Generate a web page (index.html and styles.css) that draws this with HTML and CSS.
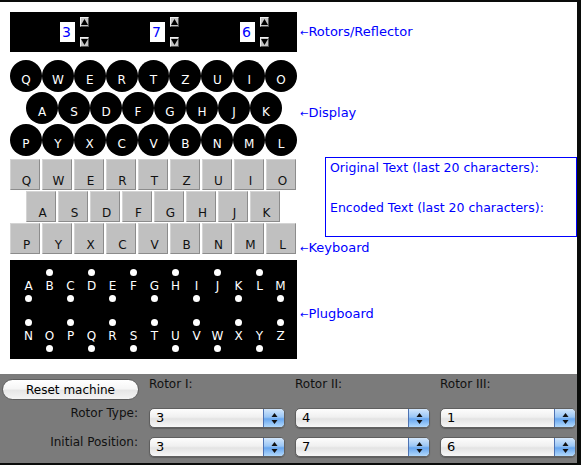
FILE: index.html
```html
<!DOCTYPE html>
<html>
<head>
<meta charset="utf-8">
<title>Enigma</title>
<link rel="stylesheet" href="styles.css">
</head>
<body>
<div class="window">
  <div class="top">
    <div class="rotors">
      <div class="rotor">
        <div class="rbox">3</div>
        <div class="rarrows">
          <div class="rbtn"><svg width="7" height="6" viewBox="0 0 7 6"><polygon points="3.5,0 7,6 0,6" fill="#000"/></svg></div>
          <div class="rbtn"><svg width="7" height="6" viewBox="0 0 7 6"><polygon points="0,0 7,0 3.5,6" fill="#000"/></svg></div>
        </div>
      </div>
      <div class="rotor">
        <div class="rbox">7</div>
        <div class="rarrows">
          <div class="rbtn"><svg width="7" height="6" viewBox="0 0 7 6"><polygon points="3.5,0 7,6 0,6" fill="#000"/></svg></div>
          <div class="rbtn"><svg width="7" height="6" viewBox="0 0 7 6"><polygon points="0,0 7,0 3.5,6" fill="#000"/></svg></div>
        </div>
      </div>
      <div class="rotor">
        <div class="rbox">6</div>
        <div class="rarrows">
          <div class="rbtn"><svg width="7" height="6" viewBox="0 0 7 6"><polygon points="3.5,0 7,6 0,6" fill="#000"/></svg></div>
          <div class="rbtn"><svg width="7" height="6" viewBox="0 0 7 6"><polygon points="0,0 7,0 3.5,6" fill="#000"/></svg></div>
        </div>
      </div>
    </div>
    <div class="label label-rotors"><span class="arr">←</span>Rotors/Reflector</div>

    <div class="display">
      <div class="crow"><span class="lamp">Q</span><span class="lamp">W</span><span class="lamp">E</span><span class="lamp">R</span><span class="lamp">T</span><span class="lamp">Z</span><span class="lamp">U</span><span class="lamp">I</span><span class="lamp">O</span></div>
      <div class="crow indent"><span class="lamp">A</span><span class="lamp">S</span><span class="lamp">D</span><span class="lamp">F</span><span class="lamp">G</span><span class="lamp">H</span><span class="lamp">J</span><span class="lamp">K</span></div>
      <div class="crow"><span class="lamp">P</span><span class="lamp">Y</span><span class="lamp">X</span><span class="lamp">C</span><span class="lamp">V</span><span class="lamp">B</span><span class="lamp">N</span><span class="lamp">M</span><span class="lamp">L</span></div>
    </div>
    <div class="label label-display"><span class="arr">←</span>Display</div>

    <div class="keyboard">
      <div class="krow"><span class="key">Q</span><span class="key">W</span><span class="key">E</span><span class="key">R</span><span class="key">T</span><span class="key">Z</span><span class="key">U</span><span class="key">I</span><span class="key">O</span></div>
      <div class="krow indent"><span class="key">A</span><span class="key">S</span><span class="key">D</span><span class="key">F</span><span class="key">G</span><span class="key">H</span><span class="key">J</span><span class="key">K</span></div>
      <div class="krow"><span class="key">P</span><span class="key">Y</span><span class="key">X</span><span class="key">C</span><span class="key">V</span><span class="key">B</span><span class="key">N</span><span class="key">M</span><span class="key">L</span></div>
    </div>
    <div class="kbside">
      <div class="textbox">
        <p class="tline">Original Text (last 20 characters):</p>
        <p class="tline"></p>
        <p class="tline">Encoded Text (last 20 characters):</p>
      </div>
      <div class="label label-kb"><span class="arr">←</span>Keyboard</div>
    </div>

    <div class="plugboard">
      <div class="prow">
        <div class="plug"><i class="dot off"></i><b>A</b><i class="dot"></i></div>
        <div class="plug"><i class="dot"></i><b>B</b><i class="dot off"></i></div>
        <div class="plug"><i class="dot off"></i><b>C</b><i class="dot"></i></div>
        <div class="plug"><i class="dot"></i><b>D</b><i class="dot off"></i></div>
        <div class="plug"><i class="dot off"></i><b>E</b><i class="dot"></i></div>
        <div class="plug"><i class="dot"></i><b>F</b><i class="dot off"></i></div>
        <div class="plug"><i class="dot off"></i><b>G</b><i class="dot"></i></div>
        <div class="plug"><i class="dot"></i><b>H</b><i class="dot off"></i></div>
        <div class="plug"><i class="dot off"></i><b>I</b><i class="dot"></i></div>
        <div class="plug"><i class="dot"></i><b>J</b><i class="dot off"></i></div>
        <div class="plug"><i class="dot off"></i><b>K</b><i class="dot"></i></div>
        <div class="plug"><i class="dot"></i><b>L</b><i class="dot off"></i></div>
        <div class="plug"><i class="dot off"></i><b>M</b><i class="dot"></i></div>
      </div>
      <div class="prow prow2">
        <div class="plug"><i class="dot"></i><b>N</b><i class="dot off"></i></div>
        <div class="plug"><i class="dot off"></i><b>O</b><i class="dot"></i></div>
        <div class="plug"><i class="dot"></i><b>P</b><i class="dot off"></i></div>
        <div class="plug"><i class="dot off"></i><b>Q</b><i class="dot"></i></div>
        <div class="plug"><i class="dot"></i><b>R</b><i class="dot off"></i></div>
        <div class="plug"><i class="dot off"></i><b>S</b><i class="dot"></i></div>
        <div class="plug"><i class="dot"></i><b>T</b><i class="dot off"></i></div>
        <div class="plug"><i class="dot off"></i><b>U</b><i class="dot"></i></div>
        <div class="plug"><i class="dot"></i><b>V</b><i class="dot off"></i></div>
        <div class="plug"><i class="dot off"></i><b>W</b><i class="dot"></i></div>
        <div class="plug"><i class="dot"></i><b>X</b><i class="dot off"></i></div>
        <div class="plug"><i class="dot off"></i><b>Y</b><i class="dot"></i></div>
        <div class="plug"><i class="dot"></i><b>Z</b><i class="dot off"></i></div>
      </div>
    </div>
    <div class="label label-plug"><span class="arr">←</span>Plugboard</div>
  </div>

  <div class="controls">
    <div class="reset">Reset machine</div>
    <div class="clabel">Rotor I:</div>
    <div class="clabel">Rotor II:</div>
    <div class="clabel">Rotor III:</div>

    <div class="rlabel">Rotor Type:</div>
    <div class="sel"><span class="val">3</span><span class="step"><svg width="7" height="11" viewBox="0 0 7 11"><polygon points="3.5,0 6.5,4 0.5,4" fill="#111"/><polygon points="0.5,7 6.5,7 3.5,11" fill="#111"/></svg></span></div>
    <div class="sel"><span class="val">4</span><span class="step"><svg width="7" height="11" viewBox="0 0 7 11"><polygon points="3.5,0 6.5,4 0.5,4" fill="#111"/><polygon points="0.5,7 6.5,7 3.5,11" fill="#111"/></svg></span></div>
    <div class="sel"><span class="val">1</span><span class="step"><svg width="7" height="11" viewBox="0 0 7 11"><polygon points="3.5,0 6.5,4 0.5,4" fill="#111"/><polygon points="0.5,7 6.5,7 3.5,11" fill="#111"/></svg></span></div>

    <div class="rlabel">Initial Position:</div>
    <div class="sel"><span class="val">3</span><span class="step"><svg width="7" height="11" viewBox="0 0 7 11"><polygon points="3.5,0 6.5,4 0.5,4" fill="#111"/><polygon points="0.5,7 6.5,7 3.5,11" fill="#111"/></svg></span></div>
    <div class="sel"><span class="val">7</span><span class="step"><svg width="7" height="11" viewBox="0 0 7 11"><polygon points="3.5,0 6.5,4 0.5,4" fill="#111"/><polygon points="0.5,7 6.5,7 3.5,11" fill="#111"/></svg></span></div>
    <div class="sel"><span class="val">6</span><span class="step"><svg width="7" height="11" viewBox="0 0 7 11"><polygon points="3.5,0 6.5,4 0.5,4" fill="#111"/><polygon points="0.5,7 6.5,7 3.5,11" fill="#111"/></svg></span></div>
  </div>
</div>
</body>
</html>
```
FILE: styles.css
```css
html, body {
  margin: 0;
  padding: 0;
}
body {
  background: #0a0c0a;
  width: 581px;
  height: 465px;
  overflow: hidden;
  font-family: "DejaVu Sans", "Liberation Sans", sans-serif;
}
.window {
  margin-top: 2px;
  width: 577px;
  height: 461px;
  background: #fff;
  display: flex;
  flex-direction: column;
}
.top {
  display: grid;
  grid-template-columns: 287px 277px;
  column-gap: 3px;
  padding: 10px 0 0 10px;
}

/* labels */
.label {
  color: #0000ff;
  font-size: 13px;
  line-height: 15px;
  white-space: nowrap;
  align-self: center;
}
.label .arr {
  font-size: 10px;
}
.label-rotors {
  align-self: start;
  margin-top: 12px;
}
.label-display {
  margin-top: 6px;
}
.label-plug {
  margin-top: 14px;
}
.label-kb {
  align-self: flex-start;
  margin-bottom: -2px;
}

/* rotors */
.rotors {
  height: 40px;
  background: #000;
  margin-bottom: 8px;
  display: flex;
  align-items: center;
  gap: 61px;
  padding-left: 50px;
  box-sizing: border-box;
}
.rotor {
  display: flex;
  align-items: center;
  gap: 5px;
}
.rbox {
  width: 15px;
  height: 20px;
  background: #fff;
  color: #0000ff;
  font-size: 14px;
  line-height: 20px;
  padding-left: 2px;
  box-sizing: border-box;
}
.rarrows {
  display: flex;
  flex-direction: column;
  justify-content: space-between;
  height: 30px;
}
.rbtn {
  width: 9px;
  height: 10px;
  box-sizing: border-box;
  background: #c4c4c4;
  border: 1px solid;
  border-color: #f0f0f0 #505050 #505050 #f0f0f0;
  display: flex;
  align-items: center;
  justify-content: center;
}
.rbtn svg {
  display: block;
}

/* display */
.display {
  margin-bottom: 3px;
}
.crow {
  display: flex;
  height: 32px;
}
.crow.indent {
  padding-left: 16px;
}
.lamp {
  width: 32px;
  height: 32px;
  border-radius: 50%;
  background: #000;
  color: #fff;
  font-size: 12px;
  line-height: 14px;
  display: flex;
  justify-content: center;
  padding-top: 13px;
  box-sizing: border-box;
}

/* keyboard */
.keyboard {
  display: flex;
  flex-direction: column;
  gap: 1px;
}
.krow {
  display: flex;
  gap: 2px;
}
.krow.indent {
  padding-left: 16px;
}
.key {
  width: 30px;
  height: 31px;
  box-sizing: border-box;
  background: #c0c0c0;
  border: 1px solid;
  border-color: #d4d4d4 #8c8c8c #8c8c8c #d4d4d4;
  color: #111;
  font-size: 12px;
  line-height: 14px;
  padding: 14px 0 0 3px;
  text-align: center;
}
.kbside {
  display: flex;
  flex-direction: column;
  justify-content: space-between;
}
.textbox {
  margin: -2px 0 0 25px;
  height: 80px;
  box-sizing: border-box;
  border: 1px solid #0000ff;
  padding: 0 4px;
  color: #0000ff;
  font-size: 12.5px;
}
.tline {
  margin: 0;
  height: 20px;
  line-height: 20px;
  white-space: nowrap;
}

/* plugboard */
.plugboard {
  margin-top: 6px;
  height: 99px;
  background: #000;
  box-sizing: border-box;
  padding: 9px 0 0 8px;
}
.prow {
  display: flex;
}
.prow2 {
  margin-top: 17px;
}
.plug {
  width: 21px;
  display: flex;
  flex-direction: column;
  align-items: center;
}
.plug b {
  font-weight: normal;
  color: #fff;
  font-size: 12px;
  line-height: 14px;
  margin: 3px 0 2px;
}
.dot {
  display: block;
  width: 7px;
  height: 7px;
  border-radius: 50%;
  background: #fff;
}
.dot.off {
  visibility: hidden;
}

/* controls */
.controls {
  margin-top: auto;
  height: 89px;
  background: #7b7b7b;
  box-sizing: border-box;
  padding: 5px 0 0 2px;
  display: grid;
  grid-template-columns: 137px 136px 135px 136px;
  grid-template-rows: 21px 21px 21px;
  column-gap: 10px;
  row-gap: 8px;
  font-size: 12px;
  color: #111;
}
.reset {
  height: 21px;
  box-sizing: border-box;
  border: 1px solid #5e5e5e;
  border-radius: 11px;
  background: linear-gradient(#ffffff, #f6f6f6 45%, #e6e6e6 55%, #f4f4f4);
  display: flex;
  align-items: center;
  justify-content: center;
  font-size: 12px;
  color: #000;
}
.clabel {
  align-self: start;
  margin-top: -2px;
  line-height: 14px;
}
.rlabel {
  text-align: right;
  align-self: start;
  margin-top: -2px;
  line-height: 14px;
  padding-right: 1px;
}
.sel {
  height: 20px;
  box-sizing: border-box;
  border: 1px solid #5f5f5f;
  border-radius: 5px;
  background: linear-gradient(#fdfdfd, #f0f0f0 45%, #e3e3e3 55%, #f7f7f7);
  display: flex;
  overflow: hidden;
  box-shadow: 0 1px 1px rgba(0, 0, 0, 0.25);
}
.val {
  flex: 1;
  padding-left: 6px;
  font-size: 13px;
  line-height: 18px;
  color: #000;
}
.step {
  width: 20px;
  border-left: 1px solid #4d72b2;
  background: linear-gradient(#d2e6fb, #9ac6f5 45%, #67a6ef 55%, #b2d9fc);
  display: flex;
  align-items: center;
  justify-content: center;
}
.step svg {
  display: block;
}
```
